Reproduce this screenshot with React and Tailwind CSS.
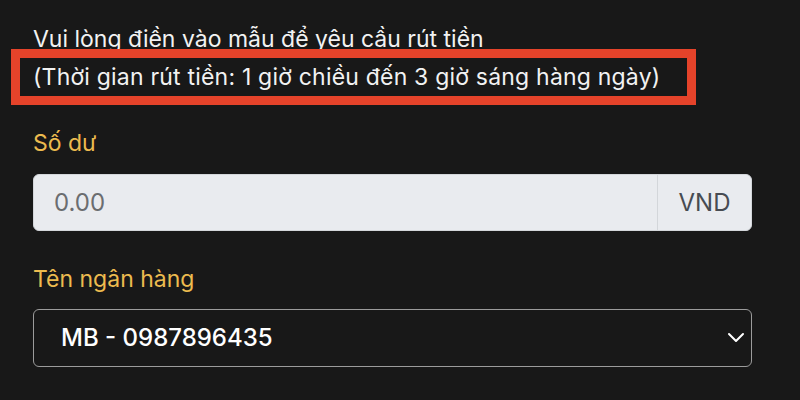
export default function App() {
    return (
        <div className="w-[800px] h-[400px] overflow-hidden bg-[#181818] font-['Inter',sans-serif] text-[23px] text-[#f2f2f2]">
            <div className="pt-[25px] pl-[33px] pr-[49px]">
                {/* intro text */}
                <p className="leading-[28px]">Vui lòng điền vào mẫu để yêu cầu rút tiền</p>

                {/* red highlight box round the hours */}
                <div className="relative -ml-[22px] -mt-[4px] w-[685px] border-[9px] border-[#e5432a] bg-[#181818] pl-[13px] pt-[1px] leading-[37px] tracking-[0.2px]">
                    (Thời gian rút tiền: 1 giờ chiều đến 3 giờ sáng hàng ngày)
                </div>

                {/* balance */}
                <label className="mt-[23px] block leading-[30px] text-[#ecbb4f]">Số dư</label>
                <div className="mt-[16px] flex h-[57px] w-[719px] overflow-hidden rounded-[6px] border border-[#d3d6da] bg-[#e9ebef] text-[24px]">
                    <div className="flex flex-1 items-center pl-[20px] text-[#6b6d70]">0.00</div>
                    <div className="flex w-[94px] items-center justify-center border-l border-[#d3d6da] text-[#474b52]">VND</div>
                </div>

                {/* bank */}
                <label className="mt-[33px] block leading-[30px] text-[#ecbb4f]">Tên ngân hàng</label>
                <div className="mt-[15px] flex h-[58px] w-[719px] items-center justify-between rounded-[6px] border-[1.5px] border-[#9b9b9b] pl-[27px] pr-[6px]">
                    <span className="text-[24px] font-medium text-white">MB - 0987896435</span>
                    <svg width="18" height="12" viewBox="0 0 18 12" fill="none" stroke="#ffffff" strokeWidth="2" strokeLinecap="round" strokeLinejoin="round">
                        <polyline points="2,2 9,9 16,2" />
                    </svg>
                </div>
            </div>
        </div>
    )
}
